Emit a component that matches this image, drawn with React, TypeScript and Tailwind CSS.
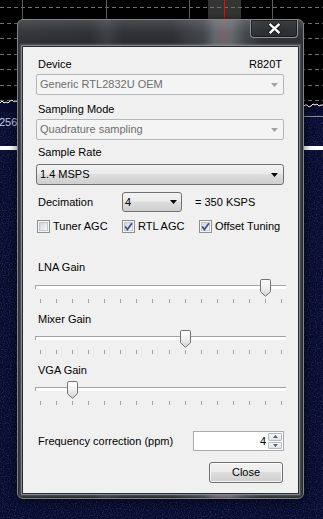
import React from "react";

function Arrow({ color }: { color: string }) {
  return (
    <svg width="7" height="4" viewBox="0 0 7 4" className="shrink-0">
      <path d="M0 0H7L3.5 4Z" fill={color} />
    </svg>
  );
}

function Combo({ text, disabled, small }: { text: string; disabled?: boolean; small?: boolean }) {
  if (disabled) {
    return (
      <div className="flex h-[21px] items-center justify-between rounded-[2px] border border-[#b4b7ba] bg-[#f4f4f4] pl-[3px] pr-[5px] text-[#6d6d6d]">
        <span>{text}</span>
        <Arrow color="#a3a3a3" />
      </div>
    );
  }
  return (
    <div
      className={
        small
          ? "flex h-[20px] w-[60px] items-center justify-between rounded-[3px] border border-[#707070] bg-[linear-gradient(180deg,#f3f3f3_0%,#ebebeb_45%,#dddddd_50%,#cfcfcf_100%)] pl-[2px] pr-[4px] text-black"
          : "flex h-[21px] items-center justify-between rounded-[3px] border border-[#707070] bg-[linear-gradient(180deg,#f3f3f3_0%,#ebebeb_45%,#dddddd_50%,#cfcfcf_100%)] pl-[3px] pr-[5px] text-black"
      }
    >
      <span>{text}</span>
      <Arrow color="#000000" />
    </div>
  );
}

function Check({ checked, label }: { checked?: boolean; label: string }) {
  return (
    <div className="flex items-center gap-[3px]">
      <span className="flex h-[13px] w-[13px] shrink-0 items-center justify-center border border-[#8e8f8f] bg-[#f4f4f4]">
        <span className="relative flex h-[9px] w-[9px] items-center justify-center border border-[#c4c8ce] bg-[linear-gradient(135deg,#cfd3d8,#f8f8f8)]">
          {checked && (
            <svg width="11" height="11" viewBox="0 0 11 11" className="absolute left-[-2px] top-[-2px]">
              <path d="M2.2 5.6 L4.4 8.6 L8.9 2.2" fill="none" stroke="#3b4f8c" strokeWidth="1.7" />
            </svg>
          )}
        </span>
      </span>
      <span>{label}</span>
    </div>
  );
}

function Slider({ index, id }: { index: number; id: string }) {
  const ticks = Array.from({ length: 16 }, (_, i) => i);
  const left = Math.round(5 + (index * 241) / 15) - 5;
  return (
    <div className="relative ml-[12px] h-[25px] w-[251px] shrink-0">
      <div className="pt-[6px]">
        <div className="h-[4px] border-l border-t border-[#a3a3a3] border-b-white border-r-[#e0e0e0] bg-white" />
      </div>
      <div className="mt-[10px] flex w-[242px] justify-between pl-[5px] box-content">
        {ticks.map((t) => (
          <span key={t} className="h-[4px] w-px bg-[#a6a6a6]" />
        ))}
      </div>
      <svg
        width="11"
        height="18"
        viewBox="0 0 11 18"
        className="absolute top-0"
        style={{ left }}
      >
        <defs>
          <linearGradient id={id} x1="0" y1="0" x2="0" y2="1">
            <stop offset="0" stopColor="#ffffff" />
            <stop offset="0.5" stopColor="#f0f0f0" />
            <stop offset="1" stopColor="#d2d2d2" />
          </linearGradient>
        </defs>
        <path
          d="M1.8 0.5 H9.2 Q10.5 0.5 10.5 1.8 V12.7 L5.5 17.3 L0.5 12.7 V1.8 Q0.5 0.5 1.8 0.5 Z"
          fill={`url(#${id})`}
          stroke="#737373"
        />
      </svg>
    </div>
  );
}

function Spectrum() {
  const hy = [7.5, 23.5, 38.5, 54.5, 69.5, 85.5, 100.5];
  const vx = [22.5, 106.5, 189.5, 272.5];
  const wave =
    "0,103 2,101 4,103 6,102 8,103 10,101 12,100 14,102 16,101 18,103 60,104 120,105 200,105 260,106 300,106 303,107 305,105 307,105 309,107 311,106 313,104 315,105 317,104 319,106 321,105 323,105";
  return (
    <svg width="323" height="519" viewBox="0 0 323 519" className="absolute left-0 top-0">
      <defs>
        <filter id="noise" x="0" y="0" width="100%" height="100%">
          <feTurbulence type="fractalNoise" baseFrequency="0.85" numOctaves="1" seed="3" />
          <feColorMatrix
            type="matrix"
            values="0 0 0 0 0.08  0 0 0 0 0.1  0 0 0 0 0.32  1.2 0 0 0 -0.55"
          />
        </filter>
      </defs>
      <rect x="0" y="0" width="323" height="519" fill="#070b2d" />
      <rect x="0" y="108" width="323" height="411" filter="url(#noise)" />
      <rect x="0" y="0" width="323" height="110" fill="#000000" />
      <rect x="208" y="0" width="33" height="110" fill="#343434" />
      {hy.map((y) => (
        <line key={y} x1="0" x2="323" y1={y} y2={y} stroke="#6f6f6f" strokeDasharray="4 3" />
      ))}
      {vx.map((x) => (
        <line key={x} x1={x} x2={x} y1="0" y2="110" stroke="#5f5f5f" />
      ))}
      <rect x="224" y="0" width="1" height="110" fill="#ff0000" />
      <polygon points={`${wave} 323,112 0,112`} fill="#070b2d" />
      <polyline points={wave} fill="none" stroke="#ffffff" strokeWidth="1" />
      <line x1="200" x2="323" y1="116.5" y2="116.5" stroke="#8c8c98" />
      <text
        x="-1"
        y="126"
        fill="#c4cbe4"
        fontSize="11"
        fontFamily="'Liberation Sans', Arial, sans-serif"
      >
        256
      </text>
      <rect x="0" y="146" width="323" height="4" fill="#ffffff" />
    </svg>
  );
}

export default function App() {
  return (
    <div className="relative h-[519px] w-[323px] overflow-hidden bg-[#070b2d] font-['Liberation_Sans',Arial,sans-serif] text-[11px] leading-[13px] text-black">
      <Spectrum />
      <div className="absolute left-[17px] top-[19px] flex h-[480px] w-[287px] flex-col rounded-[6px] border border-[#80848a] bg-[linear-gradient(180deg,rgba(255,255,255,0.16)_0px,rgba(255,255,255,0.05)_12px,rgba(0,0,0,0)_26px),linear-gradient(90deg,#2b2e32_0%,#26292d_25%,#35383c_31%,#26292d_37%,#27292d_54%,#34373b_60%,#3c4045_65%,#5d6168_69%,#6d6064_72%,#5f6369_75%,#3d4146_80%,#2a2d31_86%,#2a2d31_100%)] px-[4px] pb-[4px] shadow-[0_2px_10px_rgba(0,0,0,0.6)]">
        <div className="flex h-[26px] shrink-0 items-start justify-end pr-[1px]">
          <div className="flex h-[18px] w-[48px] items-center justify-center rounded-b-[4px] border border-t-0 border-[#8d9197] bg-[rgba(30,33,38,0.35)] shadow-[inset_0_0_0_1px_rgba(0,0,0,0.45)]">
            <svg width="13" height="11" viewBox="0 0 13 11">
              <path d="M2.5 1.8 L10.5 9.2 M10.5 1.8 L2.5 9.2" stroke="#15181c" strokeWidth="4.4" strokeLinecap="round" />
              <path d="M2.5 1.8 L10.5 9.2 M10.5 1.8 L2.5 9.2" stroke="#ffffff" strokeWidth="2.4" strokeLinecap="square" />
            </svg>
          </div>
        </div>
        <div className="flex flex-1 flex-col border border-[#2a2d31] bg-[#f0f0f0] shadow-[0_0_0_1px_#83878d,0_0_2px_2px_rgba(170,175,182,0.35)]">
          <div className="mt-[11px] flex justify-between pl-[15px] pr-[16px]">
            <span>Device</span>
            <span>R820T</span>
          </div>
          <div className="mt-[3px] px-[13px] pr-[14px]">
            <Combo text="Generic RTL2832U OEM" disabled />
          </div>
          <div className="mt-[8px] pl-[15px]">Sampling Mode</div>
          <div className="mt-[3px] pl-[13px] pr-[14px]">
            <Combo text="Quadrature sampling" disabled />
          </div>
          <div className="mt-[6px] pl-[15px]">Sample Rate</div>
          <div className="mt-[5px] pl-[13px] pr-[14px]">
            <Combo text="1.4 MSPS" />
          </div>
          <div className="mt-[7px] flex h-[20px] items-center pl-[15px]">
            <span className="w-[84px]">Decimation</span>
            <Combo text="4" small />
            <span className="ml-[13px]">= 350 KSPS</span>
          </div>
          <div className="mt-[8px] flex h-[13px] items-center pl-[14px]">
            <div className="w-[85px]">
              <Check label="Tuner AGC" />
            </div>
            <div className="w-[77px]">
              <Check label="RTL AGC" checked />
            </div>
            <Check label="Offset Tuning" checked />
          </div>
          <div className="mt-[28px] pl-[15px]">LNA Gain</div>
          <div className="mt-[5px]">
            <Slider index={14} id="g1" />
          </div>
          <div className="mt-[9px] pl-[15px]">Mixer Gain</div>
          <div className="mt-[4px]">
            <Slider index={9} id="g2" />
          </div>
          <div className="mt-[9px] pl-[15px]">VGA Gain</div>
          <div className="mt-[4px]">
            <Slider index={2} id="g3" />
          </div>
          <div className="mt-[25px] flex h-[20px] items-center justify-between pl-[15px] pr-[14px]">
            <span>Frequency correction (ppm)</span>
            <div className="flex h-[20px] w-[91px] border border-[#a9abb0] bg-white">
              <div className="flex flex-1 items-center justify-end pr-[2px]">4</div>
              <div className="flex w-[15px] flex-col gap-px py-px pr-px">
                <div className="flex flex-1 items-center justify-center rounded-[1px] border border-[#b8bdc5] bg-[linear-gradient(180deg,#f6f7f9,#dfe3e9)]">
                  <svg width="5" height="3" viewBox="0 0 5 3">
                    <path d="M0 3H5L2.5 0Z" fill="#4b5f86" />
                  </svg>
                </div>
                <div className="flex flex-1 items-center justify-center rounded-[1px] border border-[#b8bdc5] bg-[linear-gradient(180deg,#f6f7f9,#dfe3e9)]">
                  <svg width="5" height="3" viewBox="0 0 5 3">
                    <path d="M0 0H5L2.5 3Z" fill="#4b5f86" />
                  </svg>
                </div>
              </div>
            </div>
          </div>
          <div className="mt-[11px] flex justify-end pr-[15px]">
            <div className="flex h-[21px] w-[74px] items-center justify-center rounded-[3px] border border-[#707070] bg-[linear-gradient(180deg,#f3f3f3_0%,#ebebeb_45%,#dddddd_50%,#cfcfcf_100%)] shadow-[inset_0_0_0_1px_rgba(255,255,255,0.7)]">
              Close
            </div>
          </div>
        </div>
      </div>
    </div>
  );
}
